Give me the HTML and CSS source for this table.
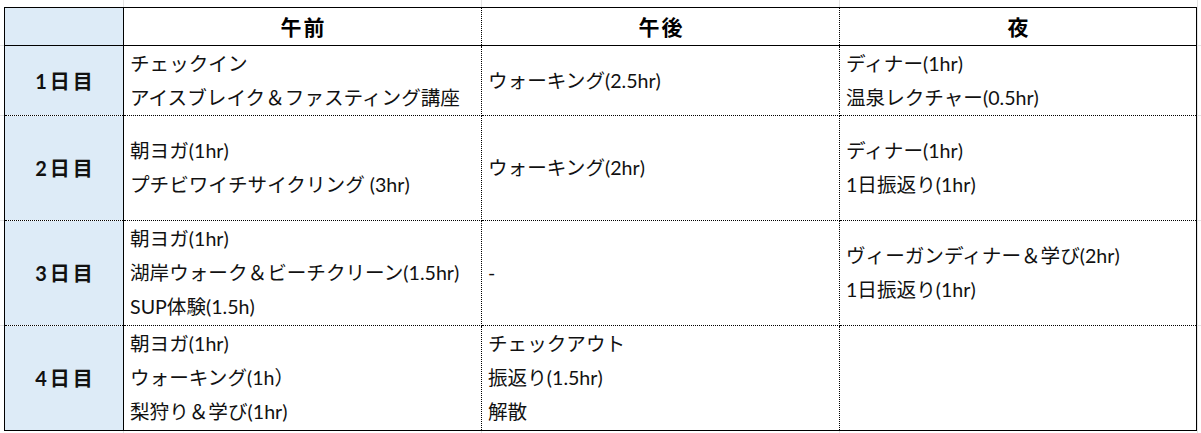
FILE: index.html
```html
<!DOCTYPE html>
<html lang="ja">
<head>
<meta charset="utf-8">
<title>スケジュール</title>
<link rel="stylesheet" href="styles.css">
</head>
<body>
<div class="sheet">
  <table class="schedule">
    <colgroup>
      <col class="c-day">
      <col class="c-slot">
      <col class="c-slot">
      <col class="c-slot3">
    </colgroup>
    <thead>
      <tr class="r-head">
        <th class="day"></th>
        <th>午前</th>
        <th>午後</th>
        <th>夜</th>
      </tr>
    </thead>
    <tbody>
      <tr class="r-1">
        <th class="day">1日目</th>
        <td><div>チェックイン</div><div>アイスブレイク＆ファスティング講座</div></td>
        <td><div>ウォーキング(2.5hr)</div></td>
        <td><div>ディナー(1hr)</div><div>温泉レクチャー(0.5hr)</div></td>
      </tr>
      <tr class="r-n">
        <th class="day">2日目</th>
        <td><div>朝ヨガ(1hr)</div><div>プチビワイチサイクリング (3hr)</div></td>
        <td><div>ウォーキング(2hr)</div></td>
        <td><div>ディナー(1hr)</div><div>1日振返り(1hr)</div></td>
      </tr>
      <tr class="r-n">
        <th class="day">3日目</th>
        <td><div>朝ヨガ(1hr)</div><div>湖岸ウォーク＆ビーチクリーン(1.5hr)</div><div>SUP体験(1.5h)</div></td>
        <td><div>-</div></td>
        <td><div>ヴィーガンディナー＆学び(2hr)</div><div>1日振返り(1hr)</div></td>
      </tr>
      <tr class="r-n">
        <th class="day">4日目</th>
        <td><div>朝ヨガ(1hr)</div><div>ウォーキング(1h）</div><div>梨狩り＆学び(1hr)</div></td>
        <td><div>チェックアウト</div><div>振返り(1.5hr)</div><div>解散</div></td>
        <td></td>
      </tr>
    </tbody>
  </table>
</div>
</body>
</html>
```
FILE: styles.css
```css
html, body {
  margin: 0;
  padding: 0;
  background: #ffffff;
}

body {
  font-family: "Lato", "Noto Sans CJK JP", sans-serif;
  color: #111111;
}

.sheet {
  padding: 7px 0 0 4px;
  height: 426px;
  background-color: #ffffff;
  background-image:
    linear-gradient(#e4e4e4, #e4e4e4),
    linear-gradient(#e4e4e4, #e4e4e4),
    linear-gradient(#e4e4e4, #e4e4e4),
    linear-gradient(#e4e4e4, #e4e4e4),
    linear-gradient(#e4e4e4, #e4e4e4),
    linear-gradient(#e4e4e4, #e4e4e4),
    linear-gradient(#e4e4e4, #e4e4e4),
    linear-gradient(#e4e4e4, #e4e4e4);
  background-repeat: no-repeat;
  background-size:
    1px 100%, 1px 100%, 1px 100%, 1px 100%,
    100% 1px, 100% 1px, 100% 1px, 100% 1px;
  background-position:
    123px 0, 481px 0, 839px 0, 1197px 0,
    0 45px, 0 115px, 0 220px, 0 325px;
}

.schedule {
  border-collapse: collapse;
  table-layout: fixed;
  width: 1193px;
  border: 1px solid #000;
  background: #ffffff;
}

.c-day { width: 119px; }
.c-slot { width: 358px; }
.c-slot3 { width: 357px; }

.schedule th,
.schedule td {
  border: 1px dotted #000;
  padding: 0 0 0 6px;
  vertical-align: middle;
  text-align: left;
  font-size: 19.6px;
  line-height: 34px;
  font-weight: 400;
  white-space: nowrap;
  overflow: hidden;
}

.schedule thead th {
  border-bottom: 1px solid #000;
  text-align: center;
  font-weight: 700;
  font-size: 21px;
  letter-spacing: 2px;
  padding: 0 0 0 2px;
  color: #000;
}

.schedule .day {
  background: #ddebf7;
  border-right: 1px solid #000;
  text-align: center;
  font-weight: 700;
  font-size: 20px;
  letter-spacing: 3px;
  padding: 0 0 0 3px;
  color: #111;
}

.r-head { height: 38px; }
.r-1 { height: 70px; }
.r-n { height: 105px; }
```
